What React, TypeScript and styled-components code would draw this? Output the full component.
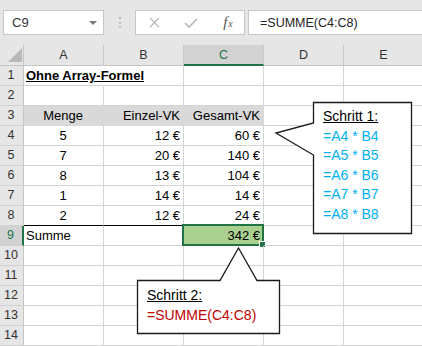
import React from 'react';
import styled, { createGlobalStyle } from 'styled-components';

const GlobalStyle = createGlobalStyle`
  html, body {
    margin: 0;
    padding: 0;
    background: #fff;
    overflow: hidden;
  }
  body {
    font-family: "Liberation Sans", Arial, sans-serif;
  }
`;

const Page = styled.div`
  position: relative;
  width: 422px;
  height: 346px;
  overflow: hidden;
  background: #fff;
`;

/* ---------- formula bar ---------- */

const FormulaBar = styled.div`
  height: 45px;
  box-sizing: border-box;
  padding: 10px 0 0 3px;
  background: #e6e6e6;
  display: flex;
  align-items: flex-start;
`;

const Box = styled.div`
  height: 25px;
  box-sizing: border-box;
  background: #fff;
  border: 1px solid #c6c6c6;
  display: flex;
  align-items: center;
`;

const NameBox = styled(Box)`
  width: 101px;
  padding: 0 6px 0 8px;
  justify-content: space-between;
  font-size: 13px;
  color: #333;
`;

const DropArrow = styled.span`
  width: 0;
  height: 0;
  border-left: 4px solid transparent;
  border-right: 4px solid transparent;
  border-top: 4px solid #7a7a7a;
`;

const Grip = styled.div`
  width: 31px;
  height: 25px;
  display: flex;
  flex-direction: column;
  align-items: center;
  justify-content: center;
  gap: 2.5px;

  span {
    width: 2px;
    height: 2px;
    background: #bdbdbd;
  }
`;

const FxBox = styled(Box)`
  width: 110px;
  display: grid;
  grid-template-columns: 36px 38px 36px;
  align-items: center;
  justify-items: center;
`;

const FxGlyph = styled.span`
  font-family: "Liberation Serif", "Times New Roman", serif;
  font-style: italic;
  font-size: 15px;
  color: #555;
  line-height: 1;

  small {
    font-size: 10px;
    margin-left: 1px;
  }
`;

const FormulaInput = styled(Box)`
  flex: 1;
  margin-left: 3px;
  border-right: none;
  padding-left: 11px;
  font-size: 12.5px;
  color: #222;
`;

/* ---------- sheet ---------- */

const Sheet = styled.div`
  display: grid;
  grid-template-columns: 24px repeat(4, 80px) 80px;
  grid-template-rows: 21px repeat(14, 20px);
`;

const Corner = styled.div`
  box-sizing: border-box;
  background: #e6e6e6;
  border-right: 1px solid #c4c4c4;
  border-bottom: 1px solid #c4c4c4;
  display: flex;
  align-items: flex-end;
  justify-content: flex-end;
  padding: 0 1px 3px 0;

  &::after {
    content: '';
    width: 0;
    height: 0;
    border-left: 14px solid transparent;
    border-bottom: 14px solid #b8b8b8;
  }
`;

const ColHead = styled.div<{ $active?: boolean }>`
  box-sizing: border-box;
  background: ${p => (p.$active ? '#d2d2d2' : '#e6e6e6')};
  border-right: 1px solid #c8c8c8;
  border-bottom: ${p => (p.$active ? '2px solid #217346' : '1px solid #c4c4c4')};
  color: ${p => (p.$active ? '#217346' : '#333')};
  font-size: 12.5px;
  line-height: 20px;
  text-align: center;
`;

const RowHead = styled.div<{ $active?: boolean }>`
  box-sizing: border-box;
  background: ${p => (p.$active ? '#d2d2d2' : '#e6e6e6')};
  border-right: ${p => (p.$active ? '2px solid #217346' : '1px solid #c4c4c4')};
  border-bottom: 1px solid #d0d0d0;
  color: ${p => (p.$active ? '#217346' : '#333')};
  font-size: 12.5px;
  line-height: 19px;
  text-align: center;
  padding-right: 1px;
`;

type Align = 'left' | 'center' | 'right';

const Cell = styled.div<{
  $align?: Align;
  $fill?: string;
  $bold?: boolean;
  $underline?: boolean;
  $spill?: boolean;
  $bottom?: string;
}>`
  position: relative;
  box-sizing: border-box;
  background: ${p => p.$fill ?? 'transparent'};
  border-right: 1px solid ${p => (p.$spill ? 'transparent' : p.$fill ?? '#d4d4d4')};
  border-bottom: 1px solid ${p => p.$bottom ?? p.$fill ?? '#d4d4d4'};
  padding: 1px 3px 0 2px;
  font-size: 13px;
  line-height: 18px;
  color: #000;
  white-space: nowrap;
  text-align: ${p => p.$align ?? 'left'};
  font-weight: ${p => (p.$bold ? 700 : 400)};
  text-decoration: ${p => (p.$underline ? 'underline' : 'none')};
`;

const Selection = styled.div`
  position: absolute;
  left: -2px;
  top: -2px;
  right: -1px;
  bottom: -1px;
  border: 2px solid #217346;
  pointer-events: none;
`;

const FillHandle = styled.div`
  position: absolute;
  right: -4px;
  bottom: -4px;
  width: 5px;
  height: 5px;
  background: #217346;
  border: 1px solid #fff;
`;

/* ---------- callouts ---------- */

const Callout = styled.div<{ $x: number; $y: number; $w: number; $h: number }>`
  position: absolute;
  left: ${p => p.$x}px;
  top: ${p => p.$y}px;
  width: ${p => p.$w}px;
  height: ${p => p.$h}px;
`;

const Outline = styled.svg`
  position: absolute;
  left: 0;
  top: 0;
  width: 100%;
  height: 100%;
  overflow: visible;

  path {
    fill: #fff;
    stroke: #1a1a1a;
    stroke-width: 1.3;
    stroke-linejoin: miter;
  }
`;

const CalloutBody = styled.div<{ $padTop: number }>`
  position: relative;
  padding: ${p => p.$padTop}px 0 0 10px;
  font-size: 14px;
  line-height: 19.5px;
`;

const Title = styled.div`
  color: #000;
  text-decoration: underline;
`;

const Formula = styled.div<{ $color: string }>`
  color: ${p => p.$color};
  white-space: nowrap;
`;

type Spec = {
  text?: string;
  align?: Align;
  fill?: string;
  bold?: boolean;
  underline?: boolean;
  spill?: boolean;
  bottom?: string;
  selected?: boolean;
};

const GREY = '#d9d9d9';
const BLUE = '#00b0f0';
const num = (text: string, bottom?: string): Spec => ({ text, align: 'right', bottom });

const data: Spec[][] = [
  [{ text: 'Ohne Array-Formel', bold: true, underline: true, spill: true }],
  [],
  [
    { text: 'Menge', align: 'center', fill: GREY },
    { text: 'Einzel-VK', align: 'right', fill: GREY },
    { text: 'Gesamt-VK', align: 'right', fill: GREY },
  ],
  [{ text: '5', align: 'center' }, num('12 €'), num('60 €')],
  [{ text: '7', align: 'center' }, num('20 €'), num('140 €')],
  [{ text: '8', align: 'center' }, num('13 €'), num('104 €')],
  [{ text: '1', align: 'center' }, num('14 €'), num('14 €')],
  [{ text: '2', align: 'center', bottom: '#000' }, num('12 €', '#000'), num('24 €', '#000')],
  [{ text: 'Summe' }, {}, { text: '342 €', align: 'right', fill: '#a9d08e', selected: true }],
  [],
  [],
  [],
  [],
  [],
];

const columns = ['A', 'B', 'C', 'D', 'E'];

const CrossIcon = () => (
  <svg width="11" height="11" viewBox="0 0 11 11">
    <path d="M1 1 L10 10 M10 1 L1 10" stroke="#b4b4b4" strokeWidth="1.1" fill="none" />
  </svg>
);

const CheckIcon = () => (
  <svg width="14" height="10" viewBox="0 0 14 10">
    <path d="M1 5 L5 9 L13 1" stroke="#b4b4b4" strokeWidth="1.6" fill="none" />
  </svg>
);

export default function App() {
  return (
    <Page>
      <GlobalStyle />
      <FormulaBar>
        <NameBox>
          <span>C9</span>
          <DropArrow />
        </NameBox>
        <Grip>
          <span />
          <span />
          <span />
        </Grip>
        <FxBox>
          <CrossIcon />
          <CheckIcon />
          <FxGlyph>
            f<small>x</small>
          </FxGlyph>
        </FxBox>
        <FormulaInput>=SUMME(C4:C8)</FormulaInput>
      </FormulaBar>

      <Sheet>
        <Corner />
        {columns.map(c => (
          <ColHead key={c} $active={c === 'C'}>
            {c}
          </ColHead>
        ))}
        {data.map((row, r) => (
          <React.Fragment key={r}>
            <RowHead $active={r === 8}>{r + 1}</RowHead>
            {columns.map((c, i) => {
              const s = row[i] ?? {};
              return (
                <Cell
                  key={c}
                  $align={s.align}
                  $fill={s.fill}
                  $bold={s.bold}
                  $underline={s.underline}
                  $spill={s.spill}
                  $bottom={s.bottom}
                >
                  {s.text}
                  {s.selected && (
                    <Selection>
                      <FillHandle />
                    </Selection>
                  )}
                </Cell>
              );
            })}
          </React.Fragment>
        ))}
      </Sheet>

      <Callout $x={313} $y={102} $w={98} $h={131}>
        <Outline>
          <path d="M0.5 0.5 H98.5 V131.5 H0.5 V53 L-37 31 L0.5 21 Z" />
        </Outline>
        <CalloutBody $padTop={5}>
          <Title>Schritt 1:</Title>
          <Formula $color={BLUE}>=A4 * B4</Formula>
          <Formula $color={BLUE}>=A5 * B5</Formula>
          <Formula $color={BLUE}>=A6 * B6</Formula>
          <Formula $color={BLUE}>=A7 * B7</Formula>
          <Formula $color={BLUE}>=A8 * B8</Formula>
        </CalloutBody>
      </Callout>

      <Callout $x={137} $y={280} $w={142} $h={53}>
        <Outline>
          <path d="M0.5 0.5 H83 L101.5 -32 L120 0.5 H142.5 V53.5 H0.5 Z" />
        </Outline>
        <CalloutBody $padTop={6}>
          <Title>Schritt 2:</Title>
          <Formula $color="#c00000">=SUMME(C4:C8)</Formula>
        </CalloutBody>
      </Callout>
    </Page>
  );
}
